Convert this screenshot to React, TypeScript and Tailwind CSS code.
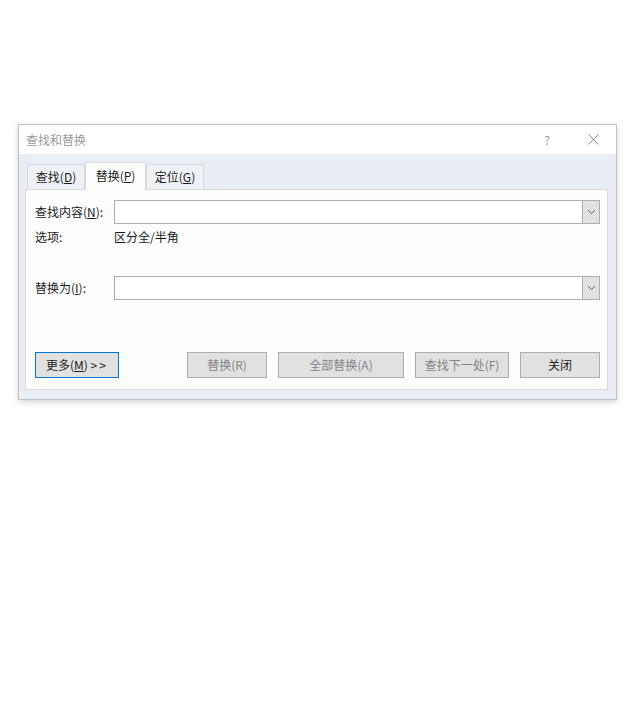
import React from 'react'

const font = { fontFamily: '"Segoe UI", "Noto Sans CJK SC", "Noto Sans", sans-serif' }

function Chevron() {
  return (
    <svg width="9" height="6" viewBox="0 0 9 6" fill="none">
      <path d="M1 1l3.5 3.5L8 1" stroke="#5f6368" strokeWidth="1" />
    </svg>
  )
}

function ComboBox() {
  return (
    <div className="flex h-[24px] flex-1 border border-[#adadad] bg-white">
      <div className="flex-1" />
      <div className="flex w-[17px] items-center justify-center border-l border-[#adadad] bg-[#e1e1e1]">
        <Chevron />
      </div>
    </div>
  )
}

function Tab({ label, k, active }: { label: string; k: string; active?: boolean }) {
  if (active) {
    return (
      <div className="relative z-10 -mb-px flex h-[28px] w-[61px] items-center justify-center border border-b-0 border-[#d9d9d9] bg-[#fdfdfd] pb-[2px] text-[#1a1a1a]">
        {label}(<u>{k}</u>)
      </div>
    )
  }
  return (
    <div className="flex h-[25px] w-[58px] items-center justify-center border border-b-0 border-[#d9d9d9] bg-[#eef2f7] text-[#1a1a1a]">
      {label}(<u>{k}</u>)
    </div>
  )
}

function Btn({ children, w, disabled }: { children: React.ReactNode; w: string; disabled?: boolean }) {
  return (
    <div
      className={`flex h-[26px] items-center justify-center border border-[#adadad] bg-[#e1e1e1] ${w} ${
        disabled ? 'text-[#838383]' : 'text-[#1a1a1a]'
      }`}
    >
      {children}
    </div>
  )
}

export default function App() {
  return (
    <div className="min-h-[715px] bg-white pl-[18px] pt-[124px] text-[12px]" style={font}>
      <div className="flex h-[276px] w-[599px] flex-col border border-[#c2c2c2] shadow-[0_2px_6px_rgba(0,0,0,0.18)]">
        {/* title bar */}
        <div className="flex h-[29px] items-center bg-white pl-[7px] pr-[17px]">
          <span className="text-[#9a9a9a]">查找和替换</span>
          <span className="ml-auto text-[#9a9a9a]">?</span>
          <svg className="ml-[38px]" width="11" height="11" viewBox="0 0 11 11">
            <path d="M0.5 0.5l10 10M10.5 0.5l-10 10" stroke="#8a8a8a" strokeWidth="1" />
          </svg>
        </div>

        {/* body */}
        <div className="flex flex-1 flex-col bg-[#e9eef4] pb-[9px] pl-[6px] pr-[8px] pt-[8px]">
          <div className="flex h-[27px] items-end pl-[2px]">
            <Tab label="查找" k="D" />
            <Tab label="替换" k="P" active />
            <Tab label="定位" k="G" />
          </div>

          <div className="flex flex-1 flex-col border border-[#d9d9d9] bg-[#fdfdfd] pb-[11px] pl-[9px] pr-[7px] pt-[10px] text-[#1a1a1a]">
            <div className="flex items-center">
              <div className="w-[79px]">
                查找内容(<u>N</u>):
              </div>
              <ComboBox />
            </div>

            <div className="mt-[5px] flex h-[16px] items-center">
              <div className="w-[79px]">选项:</div>
              <div>区分全/半角</div>
            </div>

            <div className="mt-[31px] flex items-center">
              <div className="w-[79px]">
                替换为(<u>I</u>):
              </div>
              <ComboBox />
            </div>

            <div className="mt-auto flex items-center">
              <div className="flex h-[26px] w-[84px] items-center justify-center border border-[#0078d7] bg-[#e1e1e1] text-[#1a1a1a]">
                更多(<u>M</u>)&nbsp;<span className="tracking-[2px]">&gt;&gt;</span>
              </div>
              <div className="ml-auto flex gap-[11px]">
                <Btn w="w-[80px]" disabled>
                  替换(R)
                </Btn>
                <Btn w="w-[126px]" disabled>
                  全部替换(A)
                </Btn>
                <Btn w="w-[94px]" disabled>
                  查找下一处(F)
                </Btn>
                <Btn w="w-[80px]">关闭</Btn>
              </div>
            </div>
          </div>
        </div>
      </div>
    </div>
  )
}
